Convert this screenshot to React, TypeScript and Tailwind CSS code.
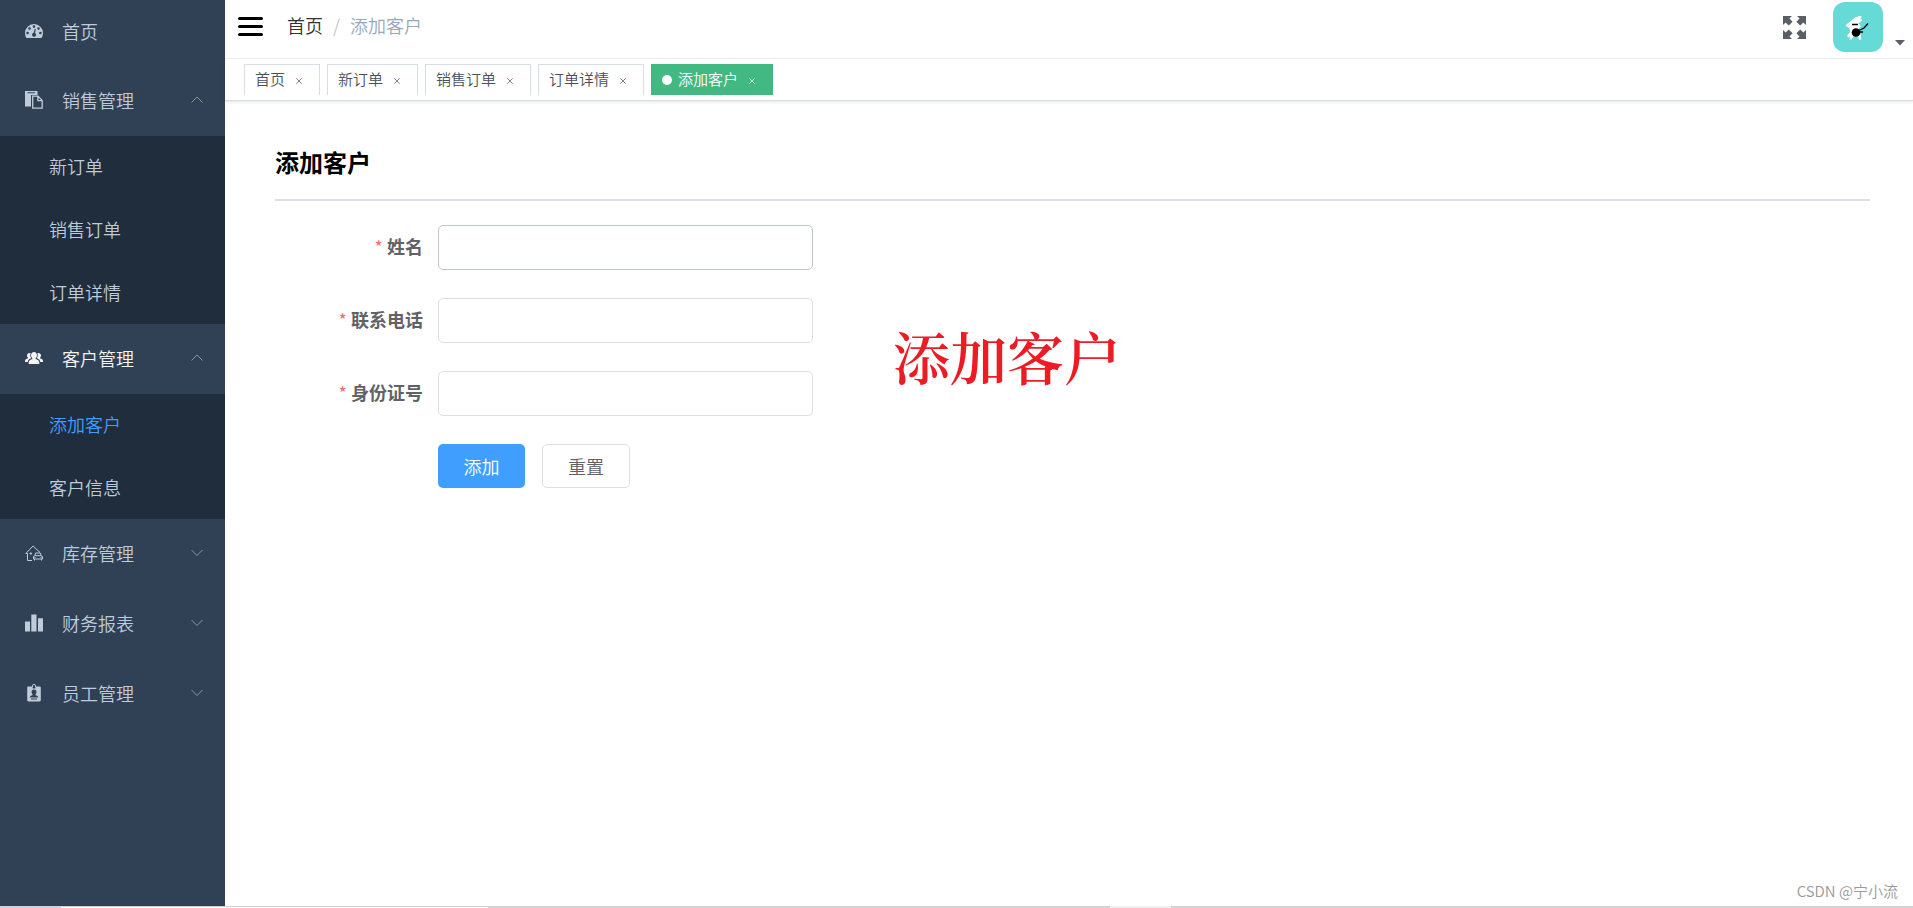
const menu = [
  { title: '首页', icon: 'dashboard' },
  { title: '销售管理', icon: 'clipboard', children: ['新订单', '销售订单', '订单详情'] },
  { title: '客户管理', icon: 'peoples', active: true, children: ['添加客户', '客户信息'] },
  { title: '库存管理', icon: 'house', children: [] },
  { title: '财务报表', icon: 'chart', children: [] },
  { title: '员工管理', icon: 'badge', children: [] },
]

const tags = ['首页', '新订单', '销售订单', '订单详情', '添加客户']

const fields = [
  { id: 'name', label: '姓名' },
  { id: 'phone', label: '联系电话' },
  { id: 'idcard', label: '身份证号' },
]

function MenuIcon({ name }: { name: string }) {
  const cls = 'w-[18px] h-[18px] shrink-0'
  if (name === 'clipboard')
    return (
      <svg className={cls} viewBox="0 0 18 18" fill="currentColor">
        <path fillRule="evenodd" d="M0 0h12.500v4H6v11.500H0zM2.500 1.200v1h7.500v-1z" />
        <path d="M7.700 5.200h5.300l4.200 4.200v7.800H7.700zM12.800 5.500v4.200H17" fill="none" stroke="currentColor" strokeWidth="1.300" />
      </svg>
    )
  if (name === 'dashboard')
    return (
      <svg className={cls} viewBox="0 0 18 18" fill="currentColor">
        <path
          fillRule="evenodd"
          d="M9 2a9 9 0 0 1 9 9c0 1.800-.5 3.500-1.400 5H1.400A9.500 9.500 0 0 1 0 11a9 9 0 0 1 9-9zM2.600 9.700a1.300 1.300 0 1 0 0 2.600 1.300 1.300 0 0 0 0-2.600zM4.500 5.200a1.300 1.300 0 1 0 0 2.600 1.300 1.300 0 0 0 0-2.600zM9 3.300a1.300 1.300 0 1 0 0 2.600 1.300 1.300 0 0 0 0-2.600zM13.500 5.200a1.300 1.300 0 1 0 0 2.600 1.300 1.300 0 0 0 0-2.600zM15.400 9.700a1.300 1.300 0 1 0 0 2.600 1.300 1.300 0 0 0 0-2.600zM9.600 6.900 8.700 10.800a2 2 0 1 0 1.300.2l.8-3.900z"
        />
      </svg>
    )
  if (name === 'peoples')
    return (
      <svg className={cls} viewBox="0 0 18 18" fill="currentColor">
        <path d="M9 3c1.800 0 3 1.300 3 3.200 0 1.300-.6 2.400-1.400 3v.9c2 .6 3.700 1.400 3.700 3V15H3.700v-1.900c0-1.600 1.700-2.400 3.700-3v-.9C6.600 8.600 6 7.500 6 6.200 6 4.300 7.200 3 9 3z" />
        <path d="M4.600 4c.4 0 .7.100 1 .3-.7 1.700-.4 3.600.6 5-1.700.6-3.300 1.500-3.500 3.700H0v-1c0-1.300 1.300-2 2.900-2.400v-.8C2.300 8.300 2 7.500 2 6.600 2 5.100 3.100 4 4.600 4zM13.400 4c-.4 0-.7.100-1 .3.700 1.700.4 3.600-.6 5 1.700.6 3.300 1.500 3.500 3.700H18v-1c0-1.300-1.300-2-2.900-2.400v-.8c.6-.5.9-1.300.9-2.200C16 5.100 14.900 4 13.400 4z" />
      </svg>
    )
  if (name === 'house')
    return (
      <svg className={cls} viewBox="0 0 18 18" fill="none" stroke="currentColor" strokeWidth="1">
        <path d="M7 16.500H2.500V9.500H.8L8 2l7 6.500M5 9h1.500v1H5zM8.500 15v-2.500l1.500-.8h6l1.500.8V15zM9.800 11.700l.9-2.700h4.600l.9 2.700M9.500 15v1.500M16.500 15v1.500M9.500 13.500h1M15.500 13.500h1" />
      </svg>
    )
  if (name === 'chart')
    return (
      <svg className={cls} viewBox="0 0 18 18" fill="currentColor">
        <path d="M0 7.500h5V17.500H0zM6.300.5h5.200v17H6.300zM13 4.300h5v13.200h-5z" />
      </svg>
    )
  return (
    <svg className={cls} viewBox="0 0 18 18" fill="currentColor">
      <path
        fillRule="evenodd"
        d="M3.500 2.500h3.700v1c0 1.300 3.600 1.300 3.600 0v-1h3.700c.8 0 1.300.5 1.300 1.200v12.600c0 .7-.5 1.200-1.300 1.200h-11c-.8 0-1.300-.5-1.300-1.200V3.700c0-.7.500-1.200 1.300-1.200zM9 5.500c-1.500 0-2.500 1-2.500 2.600 0 1 .4 1.800 1 2.300v.8c-1.500.4-2.700 1-2.700 2.300h8.400c0-1.300-1.200-1.900-2.700-2.300v-.8c.6-.5 1-1.300 1-2.300 0-1.600-1-2.600-2.500-2.600zM6 14.600v.8h6v-.8z"
      />
      <path d="M7.500 3.500V1.800a1.500 1.500 0 0 1 3 0v1.700" fill="none" stroke="currentColor" strokeWidth="1" />
    </svg>
  )
}

function Chevron({ up }: { up: boolean }) {
  return (
    <svg className="w-3 h-3 ml-auto text-[#909399]" viewBox="0 0 12 12" fill="none" stroke="currentColor">
      <path d={up ? 'M.5 8.500 6 3l5.500 5.500' : 'M.5 3 6 8.500 11.500 3'} />
    </svg>
  )
}

function Sidebar() {
  return (
    <nav className="w-[225px] shrink-0 bg-[#304156] text-[#bfcbd9] text-[18px]">
      {menu.map((item) => (
        <div key={item.title}>
          {item.children ? (
            <button
              type="button"
              className={`flex items-center w-full h-[70px] pl-[25px] pr-[22px] pb-0.5 ${item.active ? 'text-[#f4f4f5]' : ''}`}
            >
              <MenuIcon name={item.icon} />
              <span className="ml-[19px]">{item.title}</span>
              <Chevron up={item.children.length > 0} />
            </button>
          ) : (
            <a href="#" className="flex items-center h-[66px] pl-[25px] pb-1">
              <MenuIcon name={item.icon} />
              <span className="ml-[19px]">{item.title}</span>
            </a>
          )}
          {item.children && item.children.length > 0 && (
            <div className="flex flex-col gap-px bg-[#1f2d3d]">
              {item.children.map((child) => (
                <a
                  key={child}
                  href="#"
                  className={`flex items-center h-[62px] pl-[49px] pb-0.5 ${child === '添加客户' ? 'text-[#409eff]' : ''}`}
                >
                  {child}
                </a>
              ))}
            </div>
          )}
        </div>
      ))}
    </nav>
  )
}

function Navbar() {
  return (
    <header className="flex items-center h-[59px] pl-[13px] pr-2 border-b border-[#f0f1f2]">
      <button type="button" aria-label="menu" className="mb-1.5">
        <svg className="w-[25px] h-[21px]" viewBox="0 0 25 21" stroke="#000" strokeWidth="3" strokeLinecap="round">
          <path d="M1.500 2.500h22M1.500 10.500h22M1.500 18.500h22" />
        </svg>
      </button>
      <div className="flex items-center ml-6 mb-2 text-[18px]">
        <a href="#" className="text-[#303133]">
          首页
        </a>
        <span className="mx-[10px] text-[#c0c4cc]">/</span>
        <span className="text-[#97a8be]">添加客户</span>
      </div>
      <div className="flex items-center ml-auto">
        <button type="button" aria-label="fullscreen" className="mr-[27px] mb-1">
          <svg className="w-[23px] h-[23px] text-[#5a5e66]" viewBox="0 0 23 23" fill="currentColor">
            <path d="M0 0h9L6.400 2.600l3.200 3.200L5.800 9.600 2.600 6.400 0 9zM23 0v9l-2.600-2.600-3.200 3.200-3.800-3.800 3.200-3.200L14 0zM0 23v-9l2.600 2.600 3.200-3.200 3.800 3.800-3.200 3.200L9 23zM23 23h-9l2.600-2.600-3.200-3.200 3.800-3.800 3.200 3.200L23 14z" />
          </svg>
        </button>
        <button type="button" aria-label="user" className="flex items-end mb-1">
          <svg className="w-[50px] h-[50px] rounded-xl bg-[#66dad6]" viewBox="0 0 50 50">
            <path
              fill="#fff"
              d="M12.500 24c1-2 4-4 6-5.500 2-2.500 6-4.500 9-4.500 2 .5 1 2-1 3.800 1.500-.8 3-.8 2.500.4-.7 1.400-3 2.300-4 3.600 1.800.3 2.500 1.200 2.500 2.400l-2 3 2 5 .8 5.500h-2l-2-4.200-3.300.5-2.500 3.500h-2l.5-3-2 1-.8-2 2.800-3.500-.5-3.500-1.500-1.500z"
            />
            <circle cx="23" cy="30.500" r="4.300" />
            <path d="M19 22.500h6M26 28.500l5-2.500 4-4.500M27 30h3" fill="none" stroke="#000" strokeWidth="1.300" />
          </svg>
          <svg className="w-[10px] h-[6px] ml-3 mb-1.5" viewBox="0 0 10 6">
            <path d="M0 0h10L5 5.500z" fill="#5a5e66" />
          </svg>
        </button>
      </div>
    </header>
  )
}

function TagsView() {
  return (
    <div className="flex items-center gap-[7px] h-[42px] pl-[19px] pb-px border-b border-[#d8dce5] shadow-[0_1px_3px_0_rgba(0,0,0,0.12)] text-[15px]">
      {tags.map((tag) => {
        const active = tag === '添加客户'
        return (
          <div
            key={tag}
            className={`flex items-center h-[31px] pl-[10px] pr-[10px] border border-b-0 ${
              active ? 'bg-[#42b983] border-[#42b983] text-white' : 'border-[#d8dce5] text-[#495060]'
            }`}
          >
            {active && <span className="w-[10px] h-[10px] mr-1.5 rounded-full bg-white" />}
            <a href="#">{tag}</a>
            <button type="button" aria-label="close" className="flex justify-center w-5 ml-1">
              <svg className="w-[6px] h-[6px] mt-0.5" viewBox="0 0 6 6" stroke="currentColor" strokeWidth="0.700">
                <path d="M.3.3l5.400 5.400M5.700.3.3 5.700" />
              </svg>
            </button>
          </div>
        )
      })}
    </div>
  )
}

function CustomerForm() {
  return (
    <form className="w-[538px]">
      {fields.map((field, i) => (
        <div key={field.id} className="flex items-center mb-7">
          <label htmlFor={field.id} className="w-[148px] mr-[15px] pb-0.5 text-right text-[18px] font-bold text-[#606266]">
            <span className="mr-1 font-normal text-[#f56c6c]">*</span>
            {field.label}
          </label>
          <input
            id={field.id}
            type="text"
            className={`flex-1 h-[45px] px-4 rounded-[5px] border outline-none text-[18px] ${
              i === 0 ? 'border-[#c0c4cc]' : 'border-[#dcdfe6]'
            }`}
          />
        </div>
      ))}
      <div className="flex gap-[17px] ml-[163px] text-[18px]">
        <button type="button" className="w-[87px] h-[44px] rounded-[5px] bg-[#409eff] text-white">
          添加
        </button>
        <button type="reset" className="w-[88px] h-[44px] rounded-[5px] border border-[#dcdfe6] text-[#606266]">
          重置
        </button>
      </div>
    </form>
  )
}

export default function App() {
  return (
    <div className="flex flex-col min-h-screen bg-white font-['Noto_Sans_CJK_SC',sans-serif] font-[350]">
      <div className="flex flex-1">
        <Sidebar />
        <div className="flex flex-col flex-1">
          <Navbar />
          <TagsView />
          <main className="flex-1 pl-[50px] pr-[43px] pt-11">
            <h3 className="pb-5 border-b-2 border-[#dcdfe6] text-[24px] leading-[34px] font-bold text-black">添加客户</h3>
            <div className="flex mt-6">
              <CustomerForm />
              <p className="ml-20 mt-[88px] font-['Noto_Serif_CJK_SC','Noto_Sans_CJK_SC',serif] text-[57px] leading-[84px] font-semibold text-[#ed1c24]">
                添加客户
              </p>
            </div>
          </main>
          <p className="pr-[15px] pb-1 text-right text-[15px] text-[#999]">CSDN @宁小流</p>
        </div>
      </div>
      <div className="flex h-0.5 bg-[#d2d2d2]">
        <div className="w-[427px] h-px mt-px ml-[61px] bg-white" />
        <div className="w-[61px] ml-[622px] bg-[#f0f0f0]" />
      </div>
    </div>
  )
}
